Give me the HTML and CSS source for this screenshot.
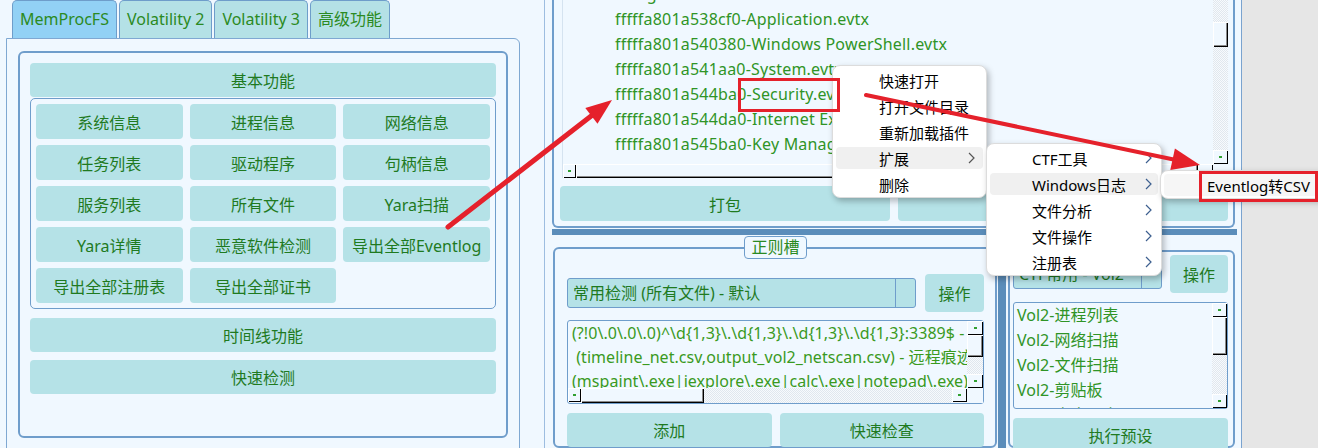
FILE: index.html
```html
<!DOCTYPE html>
<html lang="zh-CN">
<head>
<meta charset="utf-8">
<title>Memory Forensics</title>
<link rel="stylesheet" href="styles.css">
</head>
<body>
<div class="app">
  <section class="left">
    <nav class="tabs">
      <div class="tab active">MemProcFS</div>
      <div class="tab">Volatility 2</div>
      <div class="tab">Volatility 3</div>
      <div class="tab">高级功能</div>
    </nav>
    <div class="tabpanel">
      <div class="group">
        <div class="btn">基本功能</div>
        <div class="subgroup">
          <div class="btn">系统信息</div>
          <div class="btn">进程信息</div>
          <div class="btn">网络信息</div>
          <div class="btn">任务列表</div>
          <div class="btn">驱动程序</div>
          <div class="btn">句柄信息</div>
          <div class="btn">服务列表</div>
          <div class="btn">所有文件</div>
          <div class="btn">Yara扫描</div>
          <div class="btn">Yara详情</div>
          <div class="btn">恶意软件检测</div>
          <div class="btn">导出全部Eventlog</div>
          <div class="btn">导出全部注册表</div>
          <div class="btn">导出全部证书</div>
        </div>
        <div class="btn gap9">时间线功能</div>
        <div class="btn gap8">快速检测</div>
      </div>
    </div>
  </section>

  <section class="main">
    <div class="topgroup">
      <div class="tree">
        <div class="tree-view">
          <div class="tree-rows">
            <div class="node parent">eventlog</div>
            <div class="node">fffffa801a538cf0-Application.evtx</div>
            <div class="node">fffffa801a540380-Windows PowerShell.evtx</div>
            <div class="node">fffffa801a541aa0-System.evtx</div>
            <div class="node">fffffa801a544ba0-Security.evtx</div>
            <div class="node">fffffa801a544da0-Internet Explorer.evtx</div>
            <div class="node">fffffa801a545ba0-Key Management Service.evtx</div>
          </div>
        </div>
        <div class="vscroll">
          <div class="track tv-top"></div>
          <div class="thumb tv-thumb"></div>
          <div class="track grow"></div>
          <div class="sbtn"></div>
        </div>
        <div class="hscroll">
          <div class="sbtn narrow"></div>
          <div class="thumb grow"></div>
          <div class="sbtn"></div>
        </div>
        <div class="corner"></div>
      </div>
      <div class="btnrow">
        <div class="btn">打包</div>
        <div class="btn"></div>
      </div>
    </div>

    <div class="hsplit"></div>

    <div class="bottom">
      <fieldset class="regex">
        <legend>正则槽</legend>
        <div class="row">
          <div class="combo"><span class="val">常用检测 (所有文件) - 默认</span><span class="drop"></span></div>
          <div class="btn op">操作</div>
        </div>
        <div class="textarea">
          <div class="ta-text">
            <div class="ta-line">(?!0\.0\.0\.0)^\d{1,3}\.\d{1,3}\.\d{1,3}\.\d{1,3}:3389$ - 远程桌面连接</div>
            <div class="ta-line"> (timeline_net.csv,output_vol2_netscan.csv) - 远程痕迹</div>
            <div class="ta-line">(mspaint\.exe|iexplore\.exe|calc\.exe|notepad\.exe) - 可疑进程</div>
          </div>
          <div class="vscroll">
            <div class="sbtn wide"></div>
            <div class="thumb ta-thumb"></div>
            <div class="track grow"></div>
            <div class="sbtn wide"></div>
          </div>
          <div class="hscroll">
            <div class="sbtn narrow"></div>
            <div class="thumb ta-hthumb"></div>
            <div class="track grow"></div>
            <div class="sbtn"></div>
          </div>
          <div class="corner"></div>
        </div>
        <div class="btnrow2">
          <div class="btn">添加</div>
          <div class="btn">快速检查</div>
        </div>
      </fieldset>

      <div class="vsplit"></div>

      <div class="rgroup">
        <div class="row">
          <div class="combo"><span class="val">CTF常用 - Vol2</span><span class="drop"></span></div>
          <div class="btn op">操作</div>
        </div>
        <div class="listbox">
          <div class="lb-items">
            <div>Vol2-进程列表</div>
            <div>Vol2-网络扫描</div>
            <div>Vol2-文件扫描</div>
            <div>Vol2-剪贴板</div>
            <div>Vol2-命令历史</div>
          </div>
          <div class="vscroll">
            <div class="sbtn"></div>
            <div class="thumb lb-thumb"></div>
            <div class="track grow"></div>
            <div class="sbtn"></div>
          </div>
        </div>
        <div class="btn exec">执行预设</div>
      </div>
    </div>
  </section>

  <div class="gray"></div>

  <div class="menu m1">
    <div class="mi">快速打开</div>
    <div class="mi">打开文件目录</div>
    <div class="mi">重新加载插件</div>
    <div class="mi hl">扩展<svg class="chev" viewBox="0 0 7 12"><polyline points="1,1 6,6 1,11" fill="none" stroke="#555" stroke-width="1.2"/></svg></div>
    <div class="mi">删除</div>
  </div>

  <div class="menu m2">
    <div class="mi">CTF工具<svg class="chev" viewBox="0 0 7 12"><polyline points="1,1 6,6 1,11" fill="none" stroke="#3d5f8f" stroke-width="1.2"/></svg></div>
    <div class="mi hl">Windows日志<svg class="chev" viewBox="0 0 7 12"><polyline points="1,1 6,6 1,11" fill="none" stroke="#3d5f8f" stroke-width="1.2"/></svg></div>
    <div class="mi">文件分析<svg class="chev" viewBox="0 0 7 12"><polyline points="1,1 6,6 1,11" fill="none" stroke="#3d5f8f" stroke-width="1.2"/></svg></div>
    <div class="mi">文件操作<svg class="chev" viewBox="0 0 7 12"><polyline points="1,1 6,6 1,11" fill="none" stroke="#3d5f8f" stroke-width="1.2"/></svg></div>
    <div class="mi">注册表<svg class="chev" viewBox="0 0 7 12"><polyline points="1,1 6,6 1,11" fill="none" stroke="#3d5f8f" stroke-width="1.2"/></svg></div>
  </div>

  <div class="menu m3">
    <div class="mi hl">Eventlog转CSV</div>
  </div>

  <svg class="overlay" width="1318" height="448" viewBox="0 0 1318 448">
    <g fill="none" stroke="#e5212b" stroke-width="3">
      <rect x="739.5" y="79.5" width="99" height="31"/>
      <rect x="1200.5" y="172.5" width="116" height="28"/>
    </g>
    <line x1="448" y1="227" x2="595" y2="113" stroke="#e5212b" stroke-width="5" stroke-linecap="round"/>
    <polygon points="612,100 597.5,123.8 585.3,108" fill="#e5212b"/>
    <line x1="866" y1="95" x2="1176" y2="160" stroke="#e5212b" stroke-width="4" stroke-linecap="round"/>
    <polygon points="1200,165 1170.3,170 1174.9,148.5" fill="#e5212b"/>
  </svg>
</div>
</body>
</html>
```

FILE: styles.css
```css
* { box-sizing: border-box; }
html, body { margin: 0; }
body {
  background: #f0f8ff;
  font-family: "Noto Sans", "Noto Sans CJK SC", sans-serif;
  font-size: 16px;
  color: #1f7a1f;
}
.app {
  position: relative;
  display: flex;
  width: 1318px;
  height: 448px;
  overflow: hidden;
  background: #f0f8ff;
}

/* ---------- left notebook ---------- */
.left { flex: none; width: 544px; }
.tabs { display: flex; gap: 2px; height: 38px; padding-left: 12px; }
.tab {
  height: 38px;
  padding: 0 7px;
  border: 1px solid #6e9dca;
  border-bottom: none;
  border-radius: 5px 5px 0 0;
  background: #b4e1e6;
  line-height: 36px;
  color: #2b8a22;
  white-space: nowrap;
}
.tab.active { background: #92d1f5; }
.tabpanel {
  width: 514px;
  height: 430px;
  margin-left: 6px;
  padding: 12px 11px;
  border: 1px solid #7fa8d2;
  border-radius: 0 6px 0 0;
}
.group {
  height: 387px;
  padding: 10px;
  border: 2px solid #6f9dcb;
  border-radius: 6px;
}
.btn {
  display: flex;
  align-items: center;
  justify-content: center;
  height: 34px;
  background: #b5e2e7;
  border-radius: 4px;
  color: #1f7a1f;
  white-space: nowrap;
}
.subgroup {
  display: grid;
  grid-template-columns: repeat(3, 1fr);
  gap: 6px 7px;
  margin-top: 1px;
  padding: 5px;
  border: 1px solid #6f9dcb;
  border-radius: 5px;
}
.subgroup .btn { height: 35px; }
.gap9 { margin-top: 9px; }
.gap8 { margin-top: 8px; }

/* ---------- main area ---------- */
.main {
  flex: none;
  display: flex;
  flex-direction: column;
  width: 698px;
  border-left: 1px solid #9dbde0;
  border-right: 1px solid #7aa3cf;
}
.topgroup {
  flex: none;
  height: 228px;
  margin: 0 6px 0 7px;
  padding: 0 5px 5px 6px;
  border: 2px solid #6f9dcb;
  border-top: none;
  border-radius: 0 0 6px 6px;
}
.tree {
  display: grid;
  grid-template-columns: 1fr 15px;
  grid-template-rows: 164px 14px;
  height: 178px;
  margin-left: 2px;
  border-left: 1px solid #d5e3f0;
}
.tree-view { overflow: hidden; color: #2f9426; }
.tree-rows { margin-top: -18px; }
.node {
  height: 25px;
  line-height: 25px;
  padding-left: 52px;
  white-space: nowrap;
  letter-spacing: 0.2px;
}
.node.parent { padding-left: 27px; }

/* scrollbars */
.vscroll { display: flex; flex-direction: column; min-height: 0; }
.hscroll { display: flex; min-width: 0; }
.track {
  background: repeating-conic-gradient(#f7fafd 0 25%, #e0e7ee 0 50%) 0 0 / 2px 2px;
}
.grow { flex: 1; }
.sbtn {
  flex: none;
  width: 15px;
  height: 14px;
  display: flex;
  align-items: center;
  justify-content: center;
  background: #f0f8ff;
  box-shadow: inset 1px 1px 0 #fff, inset -1px -1px 0 #000;
}
.sbtn.narrow { width: 13px; }
.sbtn.wide { width: 16px; }
.sbtn::after { content: ""; width: 3px; height: 2px; background: #31a030; }
.thumb {
  background: #f0f8ff;
  box-shadow: inset 1px 1px 0 #fff, inset -1px -1px 0 #000, inset -2px -2px 0 #8a8a8a;
}
.corner { background: #f0f8ff; }
.tv-top { height: 22px; flex: none; }
.tv-thumb { height: 25px; flex: none; }
.ta-thumb { height: 22px; flex: none; }
.ta-hthumb { width: 123px; flex: none; }
.lb-thumb { height: 38px; flex: none; }

.btnrow { display: flex; gap: 8px; margin-top: 8px; }
.btnrow .btn { flex: 1; height: 35px; }

.hsplit {
  flex: none;
  height: 6px;
  margin: 1px 4px 0 7px;
  background: #5b8dba;
}
.bottom { flex: 1; display: flex; min-height: 0; }

/* regex group */
.regex {
  flex: none;
  width: 444px;
  min-width: 0;
  margin: 1px 0 0 8px;
  padding: 15px 11px 0 12px;
  border: 2px solid #6f9dcb;
  border-radius: 6px;
}
.regex legend {
  margin: 0 auto;
  padding: 0 6px;
  height: 23px;
  line-height: 21px;
  border: 1px solid #6f9dcb;
  border-radius: 4px;
  background: #f0f8ff;
  color: #2b8a22;
}
.row { display: flex; align-items: center; gap: 9px; }
.combo {
  flex: 1;
  min-width: 0;
  display: flex;
  height: 30px;
  border: 1px solid #6f9dcb;
  border-radius: 3px;
  background: #b5e2e7;
  overflow: hidden;
}
.combo .val {
  flex: 1;
  padding-left: 5px;
  line-height: 28px;
  white-space: nowrap;
  overflow: hidden;
  color: #1f7a1f;
}
.combo .drop { flex: none; width: 20px; border-left: 1px solid #6f9dcb; }
.op { flex: none; width: 59px; height: 38px; }

.textarea {
  display: grid;
  grid-template-columns: 1fr 16px;
  grid-template-rows: 67px 15px;
  height: 84px;
  margin-top: 8px;
  border: 1px solid #6f9dcb;
  border-radius: 3px;
}
.ta-text {
  overflow: hidden;
  padding-left: 4px;
  line-height: 24px;
  color: #3a9a1e;
}
.ta-line { white-space: pre; letter-spacing: 0.05px; }
.btnrow2 { display: flex; gap: 8px; margin-top: 9px; }
.btnrow2 .btn { flex: 1; }

.vsplit { flex: none; width: 8px; margin-left: 1px; background: #5b8dba; }

/* right group */
.rgroup {
  flex: 1;
  min-width: 0;
  margin: 15px 6px 0 2px;
  padding: 3px 5px 0 3px;
  border: 2px solid #6f9dcb;
  border-radius: 6px;
}
.rgroup .row { gap: 8px; }
.rgroup .op { width: 58px; }
.listbox {
  display: grid;
  grid-template-columns: 1fr 15px;
  height: 107px;
  margin-top: 9px;
  border: 1px solid #6f9dcb;
  border-radius: 3px;
}
.lb-items {
  overflow: hidden;
  padding-left: 3px;
  line-height: 25px;
  white-space: nowrap;
  color: #2f9426;
}
.exec { margin-top: 9px; }

.gray { flex: 1; background: #e6e6e6; }

/* ---------- context menus ---------- */
.menu {
  position: absolute;
  z-index: 2;
  display: flex;
  flex-direction: column;
  padding: 1px 3px 0;
  background: #fff;
  border: 1px solid #dcdcdc;
  border-radius: 8px;
  box-shadow: 2px 3px 6px rgba(0, 0, 0, 0.28);
  font-size: 15px;
  color: #000;
}
.mi {
  display: flex;
  align-items: center;
  height: 22px;
  margin: 2px 0;
  padding: 0 8px 0 43px;
  border-radius: 4px;
  white-space: nowrap;
}
.mi.hl { background: #f0f0f0; }
.chev { margin-left: auto; width: 7px; height: 12px; flex: none; }
.m1 { left: 832px; top: 65px; width: 155px; }
.m2 { left: 986px; top: 143px; width: 176px; z-index: 3; }
.m2 .mi { padding-left: 42px; padding-right: 6px; }
.m3 { left: 1160px; top: 170px; width: 170px; z-index: 4; }
.m3 .mi.hl { background: #f6f6f6; }

.overlay {
  position: absolute;
  left: 0;
  top: 0;
  z-index: 10;
  pointer-events: none;
}
```
